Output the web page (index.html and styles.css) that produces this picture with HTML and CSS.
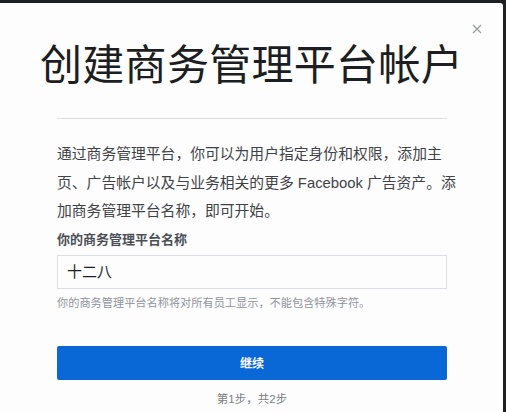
FILE: index.html
```html
<!DOCTYPE html>
<html lang="zh">
<head>
<meta charset="utf-8">
<link rel="stylesheet" href="styles.css">
</head>
<body>
<div class="dialog">
  <button class="close" aria-label="关闭">
    <svg width="10" height="10" viewBox="0 0 10 10"><path d="M1 1L9 9M9 1L1 9" stroke="#9a9da3" stroke-width="1.3"/></svg>
  </button>
  <h1 class="title">创建商务管理平台帐户</h1>
  <div class="content">
    <hr class="divider">
    <p class="intro">通过商务管理平台，你可以为用户指定身份和权限，添加主页、广告帐户以及与业务相关的更多 Facebook 广告资产。添加商务管理平台名称，即可开始。</p>
    <div class="label">你的商务管理平台名称</div>
    <div class="input">十二八</div>
    <div class="help">你的商务管理平台名称将对所有员工显示，不能包含特殊字符。</div>
    <button class="primary">继续</button>
    <div class="step">第1步，共2步</div>
  </div>
</div>
</body>
</html>
```
FILE: styles.css
```css
html, body {
  margin: 0;
  padding: 0;
  height: 100%;
  background: #1f2024;
}
body {
  padding-top: 3px;
  box-sizing: border-box;
  font-family: "Liberation Sans", "Noto Sans CJK SC", sans-serif;
}
.dialog {
  position: relative;
  width: 503px;
  height: 409px;
  background: #fdfdfd;
  border-top-right-radius: 3px;
  box-sizing: border-box;
  padding-top: 28px;
}
.close {
  position: absolute;
  top: 21px;
  right: 21px;
  border: 0;
  background: none;
  padding: 0;
  width: 10px;
  height: 10px;
  display: flex;
}
.title {
  margin: 0;
  text-align: center;
  font-family: "Noto Sans CJK SC", sans-serif;
  font-weight: 400;
  font-size: 42px;
  line-height: 62px;
  color: #1c1e21;
  letter-spacing: 0.3px;
}
.content {
  margin: 0 56px 0 57px;
}
.divider {
  border: 0;
  border-top: 1px solid #dadde1;
  margin: 25px 0 0;
}
.intro {
  margin: 21px -16px 0 0;
  font-size: 14.8px;
  line-height: 28.5px;
  color: #3f4247;
}
.label {
  margin-top: 5px;
  font-size: 13px;
  font-weight: 700;
  line-height: 18px;
  color: #4b4f56;
}
.input {
  margin-top: 6px;
  height: 34px;
  border: 1px solid #dddfe2;
  box-sizing: border-box;
  padding-left: 9px;
  font-size: 15px;
  line-height: 32px;
  color: #1c1e21;
}
.help {
  margin-top: 6px;
  font-size: 11.2px;
  line-height: 16px;
  color: #90949c;
}
.primary {
  display: block;
  width: 100%;
  margin-top: 35px;
  height: 34px;
  border: 0;
  border-radius: 2px;
  background: #0a67d6;
  color: #ffffff;
  font-family: inherit;
  font-weight: 700;
  font-size: 12px;
}
.step {
  margin-top: 11px;
  text-align: center;
  font-size: 11.5px;
  line-height: 16px;
  color: #7a7d83;
}
```
